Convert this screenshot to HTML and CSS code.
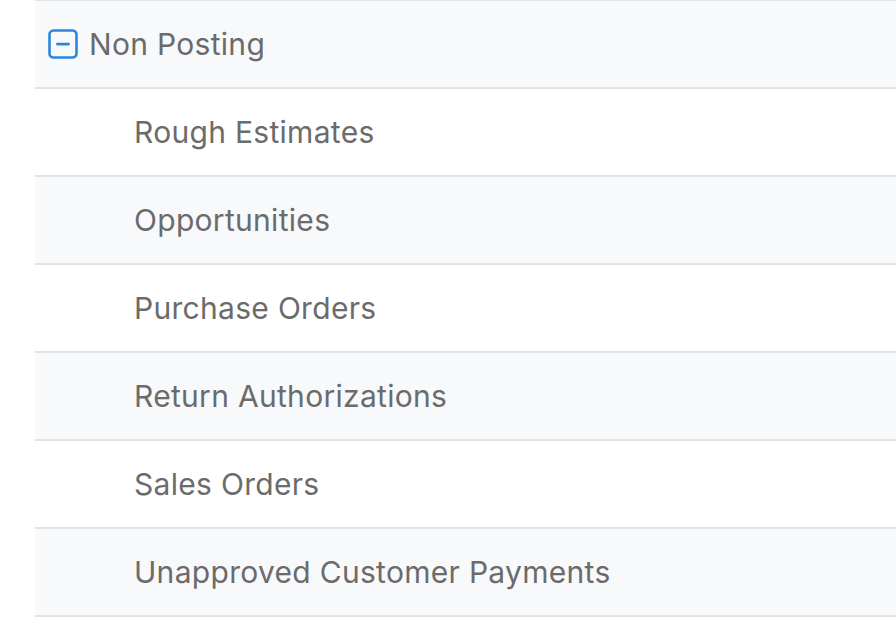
FILE: index.html
```html
<!DOCTYPE html>
<html>
<head>
<meta charset="utf-8">
<link rel="stylesheet" href="styles.css">
</head>
<body>
<div class="tree">
  <div class="row group">
    <span class="toggle" aria-hidden="true">
      <svg width="30" height="30" viewBox="0 0 30 30"><rect x="1.5" y="1.5" width="27" height="27" rx="4" fill="none" stroke="#2b86e0" stroke-width="2.6"/><rect x="8" y="13.7" width="14" height="2.8" rx="1.4" fill="#2b86e0"/></svg>
    </span>
    <span class="label">Non Posting</span>
  </div>
  <div class="row child">Rough Estimates</div>
  <div class="row child alt">Opportunities</div>
  <div class="row child">Purchase Orders</div>
  <div class="row child alt">Return Authorizations</div>
  <div class="row child">Sales Orders</div>
  <div class="row child alt">Unapproved Customer Payments</div>
</div>
</body>
</html>
```
FILE: styles.css
```css
html, body {
  margin: 0;
  padding: 0;
  background: #ffffff;
}
body {
  font-family: Inter, "Noto Sans", sans-serif;
  color: #6b6b6b;
}
.tree {
  margin-left: 35px;
  margin-top: -1px;
  border-top: 2px solid #e2e3e6;
}
.row {
  height: 86px;
  border-bottom: 2px solid #e2e3e6;
  display: flex;
  align-items: center;
  font-size: 30px;
  letter-spacing: 0.3px;
  background: #ffffff;
}
.row.group {
  background: #f8f9fb;
  padding-left: 13px;
  gap: 11px;
}
.row.alt {
  background: #f8f9fb;
}
.row.child {
  padding-left: 99px;
}
.toggle {
  display: flex;
  width: 30px;
  height: 30px;
}
.label {
  line-height: 1;
}
```
